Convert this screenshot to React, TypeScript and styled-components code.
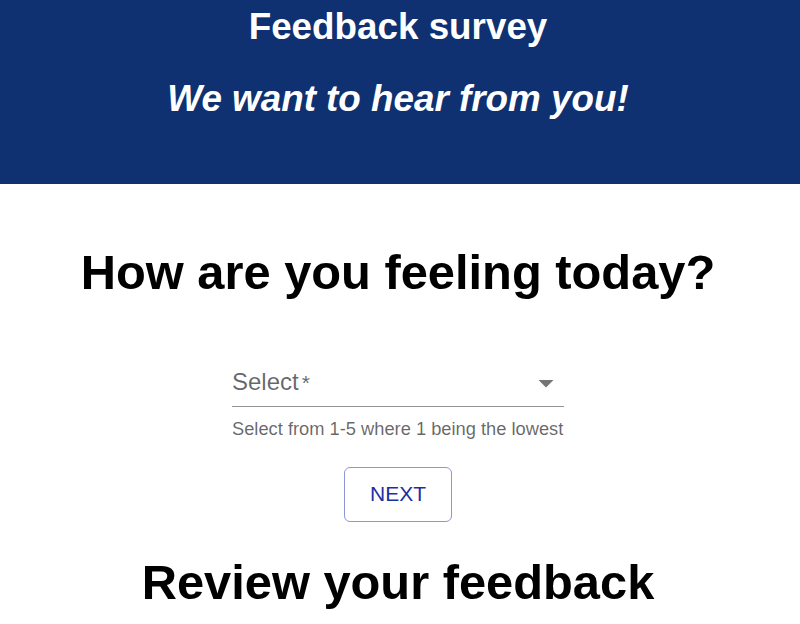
import React from "react";
import styled, { createGlobalStyle } from "styled-components";

const Global = createGlobalStyle`
  html, body { margin: 0; padding: 0; background: #ffffff; }
  body { font-family: "Liberation Sans", Arial, sans-serif; }
`;

const Page = styled.div`
  display: flex;
  flex-direction: column;
  align-items: stretch;
`;

const Header = styled.header`
  background: #0f3172;
  height: 184px;
  box-sizing: border-box;
  padding: 6px 4px 0 0;
  display: flex;
  flex-direction: column;
  align-items: center;
  color: #ffffff;
  font-family: "Liberation Sans", Arial, sans-serif;
`;

const Title = styled.h1`
  margin: 0;
  font-size: 36.8px;
  line-height: 42px;
  font-weight: 700;
`;

const Subtitle = styled.h2`
  margin: 30px 0 0;
  font-size: 36.8px;
  line-height: 42px;
  font-weight: 700;
  font-style: italic;
`;

const Main = styled.main`
  display: flex;
  flex-direction: column;
  align-items: center;
  padding-right: 4px;
`;

const Heading = styled.h2<{ $top: number }>`
  margin: ${(p) => p.$top}px 0 0;
  font-size: 48.8px;
  line-height: 56px;
  font-weight: 700;
  color: #000000;
`;

const Field = styled.div`
  margin-top: 63.5px;
  width: 332px;
  display: flex;
  flex-direction: column;
  font-family: "Liberation Sans", Arial, sans-serif;
`;

const SelectBox = styled.div`
  position: relative;
  height: 44px;
  border-bottom: 1.5px solid rgba(0, 0, 0, 0.42);
  display: flex;
  align-items: flex-end;
  justify-content: space-between;
  box-sizing: border-box;
`;

const Label = styled.span`
  font-size: 24px;
  line-height: 36px;
  color: rgba(0, 0, 0, 0.6);
  padding-bottom: 5px;
`;

const Asterisk = styled.span`
  font-size: 21px;
  margin-left: 3px;
`;

const Arrow = styled.svg`
  width: 36px;
  height: 36px;
  margin-right: 0;
  margin-bottom: 5px;
  fill: rgba(0, 0, 0, 0.54);
`;

const Helper = styled.p`
  margin: 9.5px 0 0;
  font-size: 18.3px;
  line-height: 24px;
  color: rgba(0, 0, 0, 0.6);
  white-space: nowrap;
`;

const Button = styled.button`
  margin-top: 26px;
  width: 108px;
  height: 55px;
  box-sizing: border-box;
  background: transparent;
  border: 1.5px solid #8e96d9;
  border-radius: 6px;
  color: #1c2fa0;
  font-family: "Liberation Sans", Arial, sans-serif;
  font-size: 21px;
  font-weight: 400;
  text-transform: uppercase;
  padding: 0;
  cursor: pointer;
`;

export default function App() {
  return (
    <Page>
      <Global />
      <Header>
        <Title>Feedback survey</Title>
        <Subtitle>We want to hear from you!</Subtitle>
      </Header>
      <Main>
        <Heading $top={59.5}>How are you feeling today?</Heading>
        <Field>
          <SelectBox>
            <Label>
              Select<Asterisk>*</Asterisk>
            </Label>
            <Arrow viewBox="0 0 24 24">
              <path d="M7 10l5 5 5-5z" />
            </Arrow>
          </SelectBox>
          <Helper>Select from 1-5 where 1 being the lowest</Helper>
        </Field>
        <Button>Next</Button>
        <Heading $top={32}>Review your feedback</Heading>
      </Main>
    </Page>
  );
}
